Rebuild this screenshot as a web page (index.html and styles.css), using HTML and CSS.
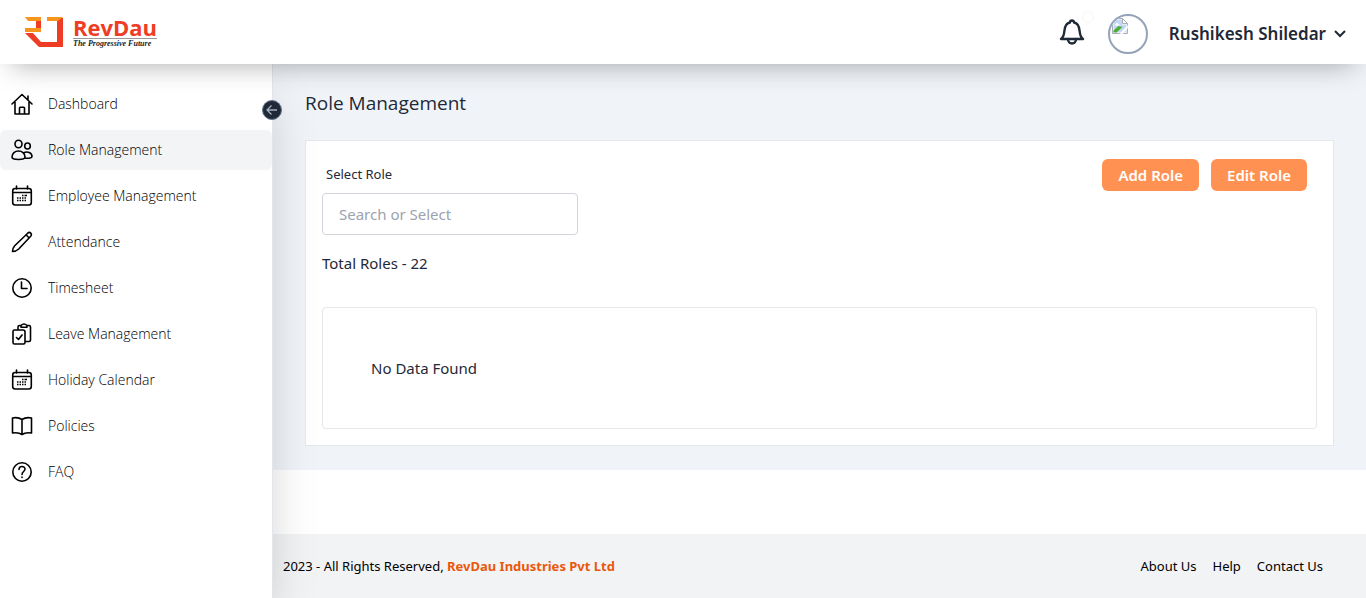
FILE: index.html
```html
<!DOCTYPE html>
<html lang="en">
<head>
<meta charset="utf-8">
<meta name="viewport" content="width=device-width, initial-scale=1">
<title>Role Management - RevDau</title>
<link rel="stylesheet" href="styles.css">
</head>
<body>
<div class="app">
  <header class="topbar">
    <a class="brand" href="#">
      <svg class="brand-mark" width="40" height="32" viewBox="0 0 40 32" aria-hidden="true">
        <path fill="#ef3d25" d="M12 2h5v14h-5zM33 2h6v29H15L1 17h8l8 9h16z"/>
        <path fill="#f7941e" d="M1 1h16v4H4zM1 12h16v4H1zM23 1h16l-5 4H23z"/>
      </svg>
      <span class="brand-text">
        <span class="brand-name">RevDau</span>
        <span class="brand-tag">The Progressive Future</span>
      </span>
    </a>
    <div class="account">
      <button class="bell" type="button" aria-label="Notifications">
        <svg width="28" height="28" viewBox="0 0 28 28" fill="none" stroke="#1f2937" stroke-width="2.400" stroke-linejoin="round" stroke-linecap="round">
          <path d="M3 21h22c-2.600-2-3-4-3.300-7.500C21.300 8 19 5 16 4.500c0-1.500-.8-2-2-2s-2 .5-2 2c-3 .5-5.300 3.500-5.700 9C6 17 5.600 19 3 21z"/>
          <path d="M10 21c0 6 8 6 8 0"/>
        </svg>
        <span class="badge"></span>
      </button>
      <span class="avatar" role="img" aria-label="Profile picture">
        <svg width="16" height="16" viewBox="0 0 16 16">
          <path fill="#fff" stroke="#a9adb2" d="M.5.500h10l5 5v10H.5z"/>
          <path fill="#c3d6f7" d="M1.500 1.500H10v5h4.500v8h-13z"/>
          <path fill="#fff" d="M3.500 6.500c0-2 3-2 3 0h1v1h-5zM10 1v5h5z"/>
          <path fill="#4caf32" d="M1.500 14.500v-2l5-4.500 4 1-6 5.500z"/>
          <path fill="#fff" d="M7.500 15.800 15.800 7v3L11 15.800z"/>
          <path fill="none" stroke="#a9adb2" d="M10.500.500v5h5"/>
        </svg>
      </span>
      <button class="user" type="button">Rushikesh Shiledar
        <svg width="12" height="8" viewBox="0 0 12 8" fill="none" stroke="#1f2937" stroke-width="2"><path d="M1 1l5 5 5-5"/></svg>
      </button>
    </div>
  </header>

  <div class="body">
    <aside class="sidebar">
      <button class="collapse" type="button" aria-label="Collapse menu">
        <svg width="12" height="12" viewBox="0 0 12 12" fill="none" stroke="#a3b0c0" stroke-width="1.300"><path d="M11 6H1.500M5.500 1.500 1 6l4.500 4.500"/></svg>
      </button>
      <nav class="menu">
        <a href="#"><svg viewBox="0 0 22 22"><path d="M1 11 11 1.500 21 11M17 7V3M4 9v12h14V9M8.500 21v-6q0-.8.8-.8h3.400q.8 0 .8.800v6"/></svg>Dashboard</a>
        <a href="#" class="active" aria-current="page"><svg viewBox="0 0 22 22"><ellipse cx="7.500" cy="5" rx="3.500" ry="3.800"/><ellipse cx="16.500" cy="7" rx="2.800" ry="3"/><path d="M7.500 12C4 12 1 14.500 1 18c0 1.500 2 2.500 6.500 2.500S14 19.500 14 18c0-3.500-3-6-6.500-6zM12.500 14c4-2.500 8.500 0 8.500 3.500 0 1.500-3 2-7 1.500"/></svg>Role Management</a>
        <a href="#"><svg viewBox="0 0 22 22"><use href="#calendar"/></svg>Employee Management</a>
        <a href="#"><svg viewBox="0 0 22 22"><path d="M1.500 20.500c0-2.500.7-4 2.200-5.700L16.700 2.200c2.200-2 4.800.8 3 3L7.700 18c-1.800 1.700-3.700 2.500-6.200 2.500zM15 3.800 18.200 7"/></svg>Attendance</a>
        <a href="#"><svg viewBox="0 0 22 22"><circle cx="11" cy="11" r="9.200"/><path d="M10.500 5v6.500H16"/></svg>Timesheet</a>
        <a href="#"><svg viewBox="0 0 22 22"><path d="M3.500 7H12q2 0 2 2v10.500q0 1.500-1.500 1.500h-9Q2 21 2 19.500v-11Q2 7 3.500 7zM7 7V4q0-1.500 1.500-1.500H10M16 2.500h2q1.500 0 1.500 1.500v13q0 1.500-1.500 1.500h-4M10 2.500q3-3 6 0v1.800h-6zM5.500 14.500l2 2 3.500-4.500"/></svg>Leave Management</a>
        <a href="#"><svg viewBox="0 0 22 22"><g id="calendar"><rect x="1.700" y="3.500" width="18.600" height="16.500" rx="2.500"/><path d="M2 7.500h18M5.500 1v3M16.500 1v3"/><path class="dots" d="M6 15.500h1.500M8.500 15.500H10M11 15.500h1.500M13.500 15.500H15M6 13h1.500M8.500 13H10M11 13h1.500M13.500 13H15M11 10.500h1.500M13.500 10.500H16"/></g></svg>Holiday Calendar</a>
        <a href="#"><svg viewBox="0 0 22 22"><path d="M11 4.500C8 2.500 4 2.500 1.500 3v15c3-.5 7-.3 9.500 1.500 2.500-1.800 6.500-2 9.500-1.500V3C18 2.500 14 2.500 11 4.500zV19"/></svg>Policies</a>
        <a href="#"><svg viewBox="0 0 22 22"><circle cx="11" cy="11" r="9.200"/><path d="M8 8.500c0-4 6-4 6-.5 0 2.500-3 2.500-3 5.500M11 16v.5"/></svg>FAQ</a>
      </nav>
    </aside>

    <div class="content">
      <main class="page">
        <h1>Role Management</h1>
        <section class="card">
          <div class="toolbar">
            <div class="field">
              <label for="role">Select Role</label>
              <input id="role" type="text" placeholder="Search or Select">
            </div>
            <div class="actions">
              <button type="button">Add Role</button>
              <button type="button">Edit Role</button>
            </div>
          </div>
          <p class="total">Total Roles - 22</p>
          <div class="empty">No Data Found</div>
        </section>
      </main>
      <footer class="footer">
        <p>2023 - All Rights Reserved, <a class="company" href="#">RevDau Industries Pvt Ltd</a></p>
        <nav class="links"><a href="#">About Us</a><a href="#">Help</a><a href="#">Contact Us</a></nav>
      </footer>
    </div>
  </div>
</div>
</body>
</html>
```
FILE: styles.css
```css
* { box-sizing: border-box; }
body, h1, p { margin: 0; }
body {
  font-family: "Noto Sans", "Open Sans", sans-serif;
  font-size: 15px;
  line-height: 24px;
  color: #1f2937;
  background: #fff;
}
a { color: inherit; text-decoration: none; }
button { font: inherit; color: inherit; border: 0; background: none; padding: 0; cursor: pointer; }
.app { min-height: 100vh; display: flex; flex-direction: column; }

.topbar {
  position: relative;
  z-index: 3;
  height: 64px;
  display: flex;
  align-items: center;
  justify-content: space-between;
  padding: 0 20px 0 24px;
  background: #fff;
  box-shadow: 0 12px 28px -12px rgba(0, 0, 0, .35);
}
.brand { display: flex; align-items: center; gap: 9px; }
.brand-text { display: flex; flex-direction: column; }
.brand-name {
  font-family: "Open Sans", sans-serif;
  font-size: 22px;
  line-height: 22px;
  font-weight: 700;
  color: #ef3d25;
}
.brand-tag {
  border-top: 1px solid #999;
  font: italic bold 8px/10px "Liberation Serif", serif;
  color: #222;
}
.account { display: flex; align-items: center; padding-top: 4px; }
.bell { position: relative; height: 28px; margin: 0 22px 4px 0; }
.bell svg { display: block; }
.badge {
  position: absolute;
  top: -7px;
  right: -8px;
  width: 12px;
  height: 12px;
  border: 1px solid #f6f6f6;
  border-radius: 50%;
}
.avatar {
  width: 40px;
  height: 40px;
  margin-right: 21px;
  padding: 2px;
  border: 2px solid #94a3b8;
  border-radius: 50%;
  overflow: hidden;
}
.avatar svg { display: block; }
.user {
  display: flex;
  align-items: center;
  gap: 8px;
  font-size: 17px;
  font-weight: 600;
}

.body { flex: 1; display: flex; }
.sidebar {
  position: relative;
  z-index: 2;
  flex: 0 0 273px;
  padding-top: 20px;
  background: #fff;
  border-right: 1px solid #e2e5e9;
  box-shadow: 0 25px 50px -12px rgba(0, 0, 0, .25);
}
.collapse {
  position: absolute;
  top: 36px;
  right: -10px;
  width: 20px;
  height: 20px;
  display: grid;
  place-items: center;
  border: 1px solid #64748b;
  border-radius: 50%;
  background: #1f2937;
}
.menu { display: flex; flex-direction: column; gap: 6px; }
.menu a {
  display: flex;
  align-items: center;
  gap: 15px;
  height: 40px;
  padding: 0 11px;
  border-radius: 6px;
  font-family: "Open Sans", sans-serif;
  font-size: 14px;
  font-weight: 300;
  color: #000;
}
.menu a.active { background: #f3f4f6; }
.menu svg {
  width: 22px;
  height: 22px;
  fill: none;
  stroke: #000;
  stroke-width: 1.6;
  stroke-linecap: round;
  stroke-linejoin: round;
}
.menu .dots { stroke-width: 1.4; stroke-linecap: butt; }

.content { flex: 1; min-width: 0; display: flex; flex-direction: column; }
.page { padding: 24px 32px; background: #f0f4f9; }
h1 { font-family: "Open Sans", sans-serif; font-size: 19px; line-height: 30px; font-weight: 400; margin-bottom: 22px; }
.card { padding: 16px; border: 1px solid #e5e7eb; background: #fff; }
.toolbar { display: flex; justify-content: space-between; align-items: flex-start; }
.field { display: flex; flex-direction: column; gap: 8px; width: 256px; }
.field label { padding: 6px 4px 0; font-size: 13px; line-height: 22px; }
.field input {
  width: 100%;
  height: 42px;
  padding: 0 16px;
  border: 1px solid #d1d5db;
  border-radius: 4px;
  background: #fff;
  font: inherit;
  color: inherit;
}
.field input::placeholder { color: #9ca3af; opacity: 1; }
.actions { display: flex; gap: 12px; padding: 2px 10px 0 0; }
.actions button {
  height: 32px;
  padding: 0 16px;
  border-radius: 6px;
  background: #ff9153;
  color: #fff;
  font-weight: 600;
}
.total { margin: 16px 0 32px; }
.empty { padding: 48px; border: 1px solid #e5e7eb; border-radius: 4px; }

.footer {
  margin-top: auto;
  min-height: 64px;
  display: flex;
  align-items: center;
  justify-content: space-between;
  padding: 0 43px 0 10px;
  background: #f2f3f5;
  font-size: 13px;
  color: #000;
}
.company { color: #ea580c; font-weight: 700; }
.links { display: flex; gap: 16px; }
```
